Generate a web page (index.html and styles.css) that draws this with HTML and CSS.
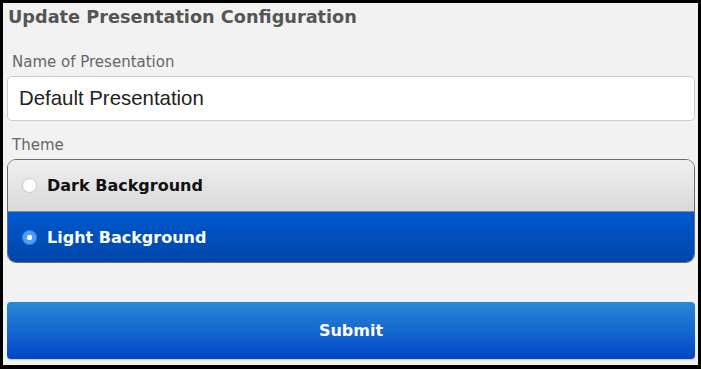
FILE: index.html
```html
<!DOCTYPE html>
<html lang="en">
<head>
  <meta charset="UTF-8"/>
  <title>Update Presentation Configuration</title>
  <link rel="stylesheet" href="styles.css">
</head>
<body>
  <div class="panel">
    <h1>Update Presentation Configuration</h1>
    <div class="field">
      <label for="name">Name of Presentation</label>
      <input id="name" value="Default Presentation">
    </div>
    <div class="field">
      <label>Theme</label>
      <div class="choices">
        <label class="choice">
          <input type="radio" name="theme" value="dark">
          <span>Dark Background</span>
        </label>
        <label class="choice">
          <input type="radio" name="theme" value="light" checked>
          <span>Light Background</span>
        </label>
      </div>
    </div>
    <button class="submit">Submit</button>
  </div>
</body>
</html>
```

FILE: styles.css
```css
*, *::before, *::after { box-sizing: border-box; margin:0; padding:0 }
html, body { height:100%; overflow:hidden }
body {
  background:#000;
  font-family:'DejaVu Sans', sans-serif;
}
.panel {
  margin:3px 3px 4px 3px;
  height:362px;
  background:#f2f2f2;
  padding:0 3px 0 4px;
}
h1 {
  font-size:17.7px; font-weight:bold;
  color:#555;
  line-height:22px;
  padding:3px 0 0 1px;
}
.field { margin-top:26px; }
.field + .field { margin-top:16px; }
.field > label {
  display:block;
  font-size:15px;
  color:#666;
  line-height:17px;
  padding-left:5px;
  margin-bottom:5px;
}
#name {
  display:block;
  width:100%;
  height:45px;
  border:1px solid #ccc;
  border-radius:5px;
  background:#fff;
  padding:0 11px;
  font-family:'Liberation Sans', Arial, sans-serif;
  font-size:20.4px;
  color:#222;
  outline:none;
}
.choices {
  border:1px solid #6b6b6b;
  border-radius:9px;
  overflow:hidden;
}
.choice {
  display:flex; align-items:center;
  height:51px;
  padding-left:14px;
  font-size:16px; font-weight:bold;
  color:#111;
  background:linear-gradient(#efefef, #d9d9d9);
  cursor:pointer;
}
.choice + .choice { border-top:1px solid #8a8a8a; }
.choice:has(input:checked) {
  color:#fff;
  background:linear-gradient(#0059cf, #0046a9);
}
.choice input {
  appearance:none;
  width:15px; height:15px;
  border-radius:50%;
  background:#fff;
  border:1px solid #c8c8c8;
  margin-right:10px;
}
.choice input:checked {
  background:radial-gradient(circle, #fff 0 2.5px, #4d9cf5 3px);
  border-color:#3c8df0;
}
.submit {
  display:block;
  width:100%;
  height:57px;
  margin-top:39px;
  border:none;
  border-radius:4px;
  background:linear-gradient(#2b89d5, #0046c9);
  box-shadow:0 1px 1px rgba(0,0,0,0.15);
  color:#fff;
  font-family:'DejaVu Sans', sans-serif;
  font-size:16px; font-weight:bold;
  cursor:pointer;
}
```
